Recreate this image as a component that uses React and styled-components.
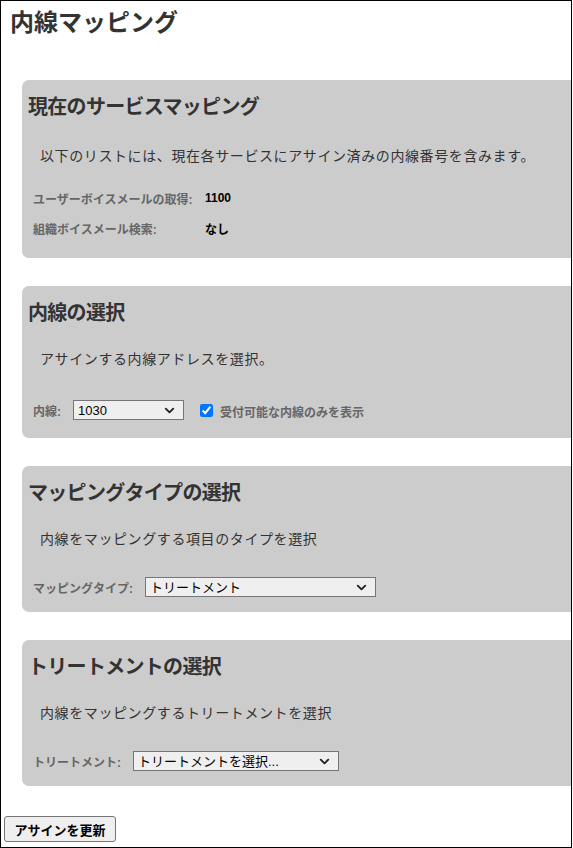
import React from "react";
import styled, { createGlobalStyle } from "styled-components";
import { ChevronDown } from "lucide-react";

const GlobalStyle = createGlobalStyle`
  html, body {
    margin: 0;
    padding: 0;
    background: #fff;
  }
  body {
    font-family: "Liberation Sans", "Noto Sans CJK JP", sans-serif;
  }
`;

const App = () => {
  return (
    <>
      <GlobalStyle />
      <Frame>
        <Title>内線マッピング</Title>

        <Panel>
          <Heading>現在のサービスマッピング</Heading>
          <Description $first>
            以下のリストには、現在各サービスにアサイン済みの内線番号を含みます。
          </Description>
          <MapTable>
            <tbody>
              <tr>
                <LabelCell>ユーザーボイスメールの取得:</LabelCell>
                <ValueCell>1100</ValueCell>
              </tr>
              <tr>
                <LabelCell>組織ボイスメール検索:</LabelCell>
                <ValueCell>なし</ValueCell>
              </tr>
            </tbody>
          </MapTable>
        </Panel>

        <Panel>
          <Heading>内線の選択</Heading>
          <Description>アサインする内線アドレスを選択。</Description>
          <Row $tall>
            <Label>内線:</Label>
            <SelectBox width={111} value="1030" options={["1030"]} />
            <CheckLabel>
              <Check type="checkbox" defaultChecked />
              <span>受付可能な内線のみを表示</span>
            </CheckLabel>
          </Row>
        </Panel>

        <Panel>
          <Heading>マッピングタイプの選択</Heading>
          <Description>内線をマッピングする項目のタイプを選択</Description>
          <Row>
            <Label>マッピングタイプ:</Label>
            <SelectBox width={231} value="トリートメント" options={["トリートメント"]} />
          </Row>
        </Panel>

        <Panel>
          <Heading>トリートメントの選択</Heading>
          <Description>内線をマッピングするトリートメントを選択</Description>
          <Row>
            <Label>トリートメント:</Label>
            <SelectBox width={206} value="トリートメントを選択..." options={["トリートメントを選択..."]} />
          </Row>
        </Panel>

        <UpdateButton>アサインを更新</UpdateButton>
      </Frame>
    </>
  );
};

const SelectBox = ({ width, value, options }) => (
  <SelectWrap style={{ width }}>
    <Select defaultValue={value}>
      {options.map((o) => (
        <option key={o}>{o}</option>
      ))}
    </Select>
    <Chevron>
      <ChevronDown size={15} strokeWidth={3} />
    </Chevron>
  </SelectWrap>
);

const Frame = styled.div`
  box-sizing: border-box;
  width: 572px;
  height: 848px;
  border: 1px solid #000;
  overflow: hidden;
`;

const Title = styled.h1`
  margin: 7px 0 42px 9px;
  font-size: 24px;
  line-height: 30px;
  font-weight: bold;
  color: #333;
`;

const Panel = styled.section`
  background: #cccccc;
  border-radius: 7px;
  margin: 0 -40px 28px 21px;
  padding: 14px 0 15px 6px;
`;

const Heading = styled.h2`
  margin: 0;
  font-size: 20px;
  line-height: 26px;
  font-weight: bold;
  letter-spacing: -0.7px;
  color: #333;
`;

const Description = styled.p`
  margin: ${(p) => (p.$first ? "26px" : "23px")} 0 0 12px;
  font-size: 14px;
  line-height: 20px;
  letter-spacing: 0.6px;
  color: #333;
`;

const MapTable = styled.table`
  margin: 17px 0 0 3px;
  border-collapse: collapse;
`;

const LabelCell = styled.td`
  width: 172px;
  height: 30px;
  padding: 0 0 0 2px;
  font-size: 12px;
  font-weight: bold;
  color: #666;
  vertical-align: middle;
`;

const ValueCell = styled.td`
  padding: 0;
  font-size: 12px;
  font-weight: bold;
  color: #000;
  vertical-align: middle;
`;

const Row = styled.div`
  display: flex;
  align-items: center;
  gap: 12px;
  height: ${(p) => (p.$tall ? "26px" : "20px")};
  margin: 28px 0 0 5px;
`;

const Label = styled.span`
  font-size: 12px;
  font-weight: bold;
  color: #666;
`;

const SelectWrap = styled.div`
  position: relative;
  height: 20px;
`;

const Select = styled.select`
  appearance: none;
  box-sizing: border-box;
  width: 100%;
  height: 20px;
  margin: 0;
  padding: 0 20px 0 4px;
  border: 1px solid #767676;
  border-radius: 0;
  background: #efefef;
  font-family: "Liberation Sans", "Noto Sans CJK JP", sans-serif;
  font-size: 13px;
  color: #000;
`;

const Chevron = styled.span`
  position: absolute;
  right: 7px;
  top: 3px;
  display: flex;
  color: #222;
  pointer-events: none;
`;

const CheckLabel = styled.label`
  display: flex;
  align-items: center;
  gap: 7px;
  margin-left: 4px;
  font-size: 12px;
  font-weight: bold;
  color: #666;

  span {
    padding-top: 2px;
  }
`;

const Check = styled.input`
  width: 13px;
  height: 13px;
  margin: 0;
  accent-color: #0075ff;
`;

const UpdateButton = styled.button`
  margin: 2px 0 0 3px;
  height: 26px;
  width: 112px;
  padding: 0;
  border: 1px solid #767676;
  border-radius: 3px;
  background: #efefef;
  font-family: "Liberation Sans", "Noto Sans CJK JP", sans-serif;
  font-size: 13px;
  font-weight: bold;
  color: #000;
`;

export default App;
